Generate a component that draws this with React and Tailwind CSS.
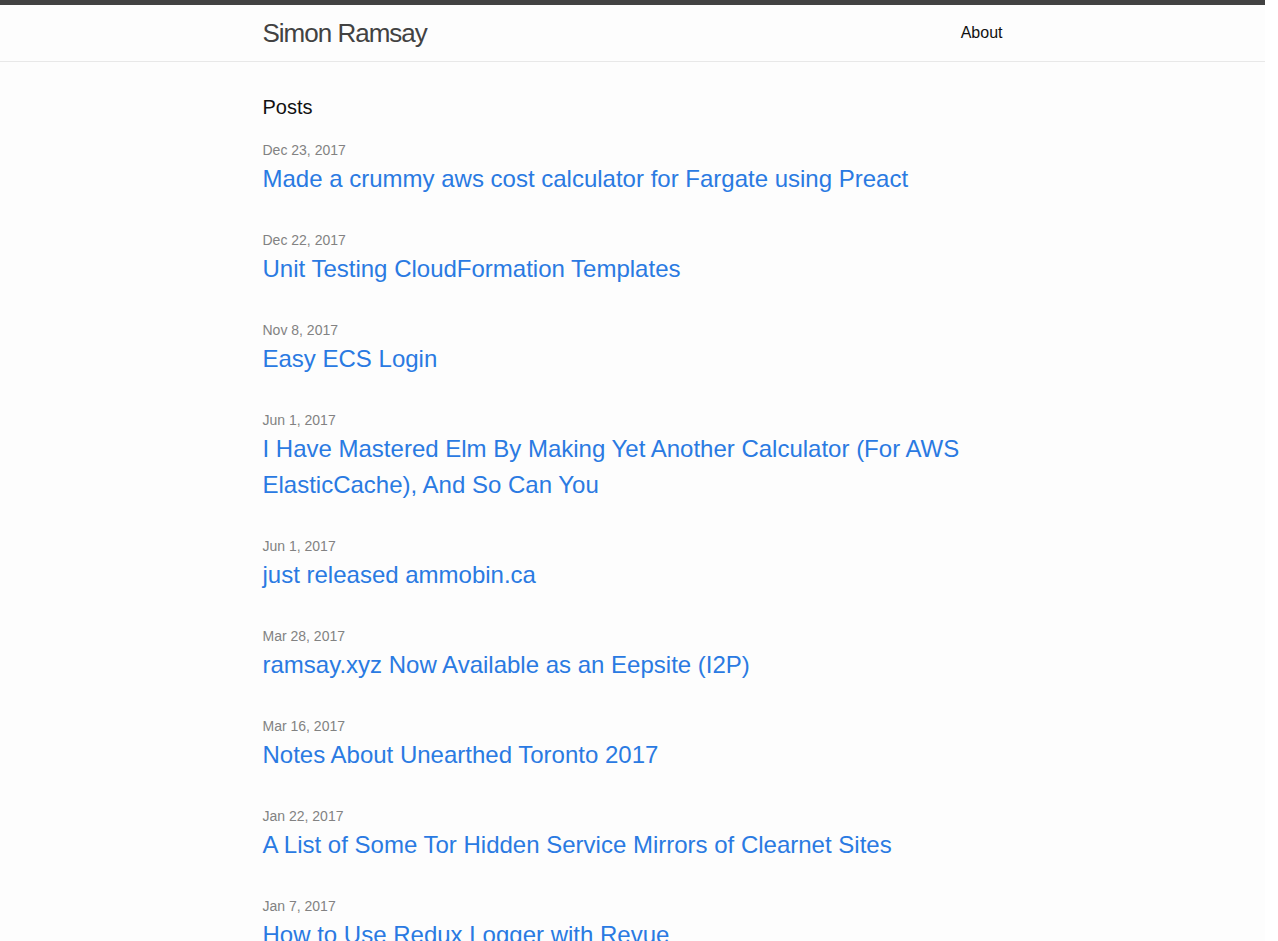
export default function App() {
  const posts = [
    ["Dec 23, 2017", "Made a crummy aws cost calculator for Fargate using Preact"],
    ["Dec 22, 2017", "Unit Testing CloudFormation Templates"],
    ["Nov 8, 2017", "Easy ECS Login"],
    ["Jun 1, 2017", "I Have Mastered Elm By Making Yet Another Calculator (For AWS ElasticCache), And So Can You"],
    ["Jun 1, 2017", "just released ammobin.ca"],
    ["Mar 28, 2017", "ramsay.xyz Now Available as an Eepsite (I2P)"],
    ["Mar 16, 2017", "Notes About Unearthed Toronto 2017"],
    ["Jan 22, 2017", "A List of Some Tor Hidden Service Mirrors of Clearnet Sites"],
    ["Jan 7, 2017", "How to Use Redux Logger with Revue"],
  ];
  return (
    <div className="bg-white min-h-screen" style={{ fontFamily: '"Liberation Sans", Arial, sans-serif' }}>
      <div className="w-[1265px] bg-[#fdfdfd] text-[#111] text-[16px] leading-[1.5] min-h-screen">
        <header className="border-t-[5px] border-t-[#424242] border-b border-b-[#e8e8e8]">
          <div className="max-w-[800px] mx-auto px-[30px] flex justify-between">
            <a className="text-[26px] leading-[56px] tracking-[-1px] text-[#424242]">Simon Ramsay</a>
            <nav className="leading-[56px]">
              <a className="text-[#111]">About</a>
            </nav>
          </div>
        </header>
        <main className="py-[30px]">
          <div className="max-w-[800px] mx-auto px-[30px]">
            <h1 className="text-[20px] leading-[30px] mb-[18px]">Posts</h1>
            <ul>
              {posts.map(([d, t], i) => (
                <li key={i} className="mb-[33px]">
                  <div className="text-[14px] leading-[21px] text-[#828282]">{d}</div>
                  <a className="block text-[24px] leading-[36px] text-[#2a7ae2]">{t}</a>
                </li>
              ))}
            </ul>
          </div>
        </main>
      </div>
    </div>
  );
}
